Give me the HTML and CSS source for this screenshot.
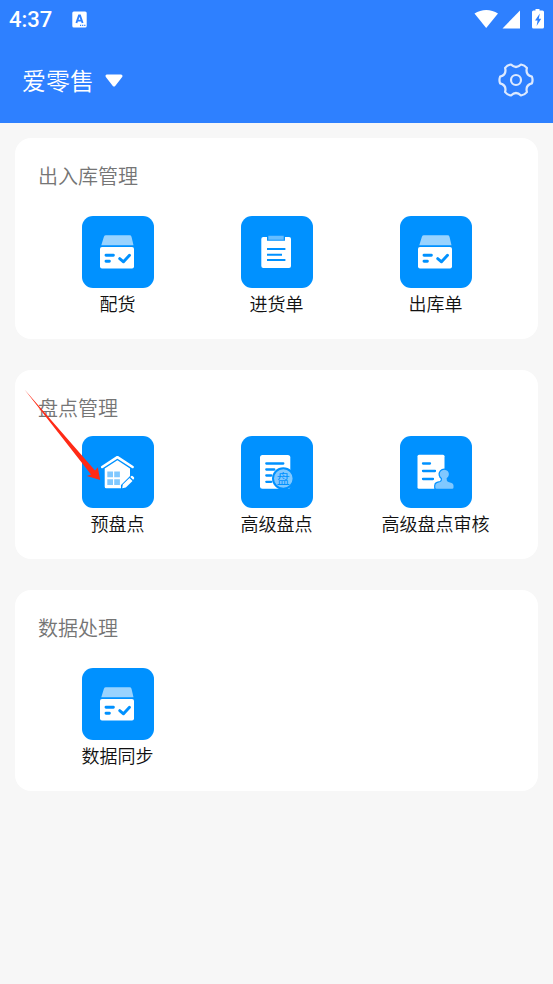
FILE: index.html
```html
<!DOCTYPE html>
<html lang="zh-CN">
<head>
<meta charset="utf-8">
<meta name="viewport" content="width=device-width, initial-scale=1">
<title>爱零售</title>
<link rel="stylesheet" href="styles.css">
</head>
<body>
<svg class="defs" aria-hidden="true">
  <symbol id="box" viewBox="0 0 72 72">
    <path d="M24 19.3h23.6a2 2 0 0 1 1.9 1.4l2 8.600H19.300l2.600-8.600a2.200 2.200 0 0 1 2.100-1.400z" fill="#99d3ff"/>
    <rect x="18" y="31" width="34" height="21.500" rx="2" fill="#fff"/>
    <path d="M24 39.200h7.400M24 45.300h3.400M37.700 42.600l3.800 3.200 6-6.600" fill="none" stroke="#0091ff" stroke-width="2.900" stroke-linecap="round" stroke-linejoin="round"/>
  </symbol>
</svg>
<header class="top">
  <div class="status">
    <span class="clock">4:37</span>
    <svg class="ime" width="16" height="17" viewBox="0 0 16 17" aria-hidden="true">
      <rect x="0.3" y="0.5" width="14.4" height="16" rx="1.6" fill="#fff"/>
      <path d="M4.400 12L7 4.500h1L10.600 12M5.500 9.600h4" fill="none" stroke="#2e80ff" stroke-width="1.900"/>
      <path d="M8 14.300h5.400" stroke="#2e80ff" stroke-width="1.200" stroke-dasharray="1.200 .9"/>
    </svg>
    <svg class="signals" width="70" height="20" viewBox="0 0 70 20" aria-hidden="true">
      <path d="M0.500 4.600C7.500 -.3 17 -.3 24 4.600L12.200 19z" fill="#fff"/>
      <path d="M46 1.500V19.500H28.500z" fill="#fff"/>
      <path d="M61.500 0h4v1.500h3a1.500 1.500 0 0 1 1.500 1.500v15a1.500 1.500 0 0 1-1.500 1.500h-9a1.500 1.500 0 0 1-1.500-1.500V3A1.500 1.500 0 0 1 59.500 1.500h2z" fill="#fff"/>
      <path d="M65.800 4.500l-4.800 7h2.600l-1 5.500 4.600-7.200h-2.400z" fill="#2e80ff"/>
    </svg>
  </div>
  <div class="bar">
    <button class="shop" type="button">爱零售
      <svg width="20" height="16" viewBox="0 0 20 16" aria-hidden="true"><path d="M3 4h14L10 13z" fill="#fff" stroke="#fff" stroke-width="3" stroke-linejoin="round"/></svg>
    </button>
    <button class="gear" type="button" aria-label="设置">
      <svg width="36" height="36" viewBox="-18 -18 36 36" fill="none" stroke="#dce9ff" stroke-width="2.200" stroke-linejoin="round" aria-hidden="true">
        <path d="M-5 -15.500Q0 -10.500 5 -15.500Q8.600 -14.900 10.900 -12.100Q9.100 -5.300 15.900 -3.400Q17.200 0 15.900 3.400Q9.100 5.300 10.900 12.100Q8.600 14.900 5 15.500Q0 10.500 -5 15.500Q-8.600 14.900 -10.900 12.100Q-9.100 5.300 -15.900 3.400Q-17.200 0 -15.900 -3.400Q-9.100 -5.300 -10.900 -12.100Q-8.600 -14.900 -5 -15.500Z"/>
        <circle r="5"/>
      </svg>
    </button>
  </div>
</header>
<main class="cards">
  <section class="card">
    <h2>出入库管理</h2>
    <div class="grid">
      <a class="item" href="#"><svg class="tile"><use href="#box"/></svg><span>配货</span></a>
      <a class="item" href="#"><svg class="tile" viewBox="0 0 72 72">
        <rect x="20.300" y="21" width="29.700" height="31" rx="2" fill="#fff"/>
        <path d="M26 19h18v5.700H26z" fill="#0091ff"/>
        <path d="M27.300 19.700h15.400v4H27.300z" fill="#66bdff"/>
        <path d="M26 33h18.400M26 38.700h15M26 44h18.400" stroke="#0091ff" stroke-width="2"/>
      </svg><span>进货单</span></a>
      <a class="item" href="#"><svg class="tile"><use href="#box"/></svg><span>出库单</span></a>
    </div>
  </section>
  <section class="card compact">
    <h2>盘点管理</h2>
    <div class="grid">
      <a class="item" href="#"><svg class="tile" viewBox="0 0 72 72">
        <path d="M20.200 31L35.400 21.200 50.600 31" fill="none" stroke="#fff" stroke-width="2.600" stroke-linecap="round" stroke-linejoin="round"/>
        <path d="M22.700 32.500L35.400 24.300 48 32.500V40L39 49v3.300H24.200a1.500 1.500 0 0 1-1.500-1.500z" fill="#fff"/>
        <path d="M25.300 35.500h5.700v5.700h-5.700zM32.200 35.500h5.700v5.700h-5.700zM25.300 43.200h5.700v5.700h-5.700zM32.200 43.200h5.700v5.700h-5.700z" fill="#80c8ff"/>
        <path d="M40.200 52.300l.6-3.700 6.700-6.700 3 3-6.700 6.700zM48.300 41.100l1-1q.8-.6 1.600.2l1 1q.7.8 0 1.600l-.8.900z" fill="#fff"/>
      </svg><span>预盘点</span></a>
      <a class="item" href="#"><svg class="tile" viewBox="0 0 72 72">
        <rect x="19" y="19" width="30.300" height="33.700" rx="2.500" fill="#fff"/>
        <path d="M25.300 27.500h17M25.300 33.500h8M25.300 39.500h5M25.300 45.800h5" stroke="#0091ff" stroke-width="2.300" stroke-linecap="round"/>
        <circle cx="42.300" cy="42.500" r="10.300" fill="#80c8ff" stroke="#0091ff" stroke-width="2"/>
        <text class="mark" x="42.300" y="47">盘</text>
      </svg><span>高级盘点</span></a>
      <a class="item" href="#"><svg class="tile" viewBox="0 0 72 72">
        <rect x="17.500" y="18.800" width="27" height="34" rx="1.500" fill="#fff"/>
        <path d="M23 27.500h7M23 35h12M23 43h10" stroke="#0091ff" stroke-width="2.300" stroke-linecap="round"/>
        <path d="M42 42.300a4.600 4.600 0 1 1 4.600 0q-.3 3 1.800 3.800l3.200.8q1.900.6 1.900 2.500v2q0 1.400-1.400 1.400H36.700q-1.400 0-1.400-1.400v-2q0-1.900 1.900-2.500l3-.8q2.100-.8 1.800-3.800z" fill="#80c8ff" stroke="#0091ff" stroke-width="2.400" paint-order="stroke"/>
      </svg><span>高级盘点审核</span></a>
    </div>
    <svg class="arrow" width="78" height="92" viewBox="0 0 78 92" aria-hidden="true"><path d="M0.500 0.500L67 85.500 62.700 87 76.200 91 73.800 78.300 71 81.500z" fill="#ff2a16"/></svg>
  </section>
  <section class="card">
    <h2>数据处理</h2>
    <div class="grid">
      <a class="item" href="#"><svg class="tile"><use href="#box"/></svg><span>数据同步</span></a>
    </div>
  </section>
</main>
</body>
</html>
```
FILE: styles.css
```css
* { box-sizing: border-box; }
body {
  margin: 0;
  min-height: 100vh;
  background: #f7f7f7;
  color: #111;
  font-family: Roboto, "Noto Sans CJK SC", sans-serif;
  font-weight: 350;
}
.defs { position: absolute; width: 0; height: 0; }
.top { background: #2e80ff; color: #fff; }
.status {
  display: flex;
  align-items: center;
  height: 38px;
  padding: 0 9px;
}
.clock { padding-top: 2px; font-size: 22px; font-weight: 500; line-height: 36px; }
.ime { margin-left: 20px; }
.signals { margin-left: auto; }
.bar {
  display: flex;
  align-items: center;
  justify-content: space-between;
  height: 85px;
  padding: 0 19px 2px 22px;
}
button {
  border: 0;
  padding: 0;
  background: none;
  color: inherit;
  font: inherit;
}
.shop { display: flex; align-items: center; gap: 10px; font-size: 24px; }
.gear { display: flex; }
.cards {
  display: flex;
  flex-direction: column;
  gap: 31px;
  padding: 15px;
}
.card {
  position: relative;
  padding: 26px 23px 17px;
  border-radius: 16px;
  background: #fff;
}
h2 {
  margin: 0 0 26px;
  color: #757575;
  font-size: 20px;
  font-weight: 350;
  line-height: 26px;
}
.compact h2 { margin-bottom: 14px; }
.grid { display: grid; grid-template-columns: repeat(3, 1fr); }
.item {
  display: flex;
  flex-direction: column;
  align-items: center;
  color: inherit;
  text-decoration: none;
  font-size: 18px;
  line-height: 34px;
  white-space: nowrap;
}
.tile { width: 72px; height: 72px; border-radius: 11px; background: #0091ff; }
.mark { fill: #0091ff; font-size: 13px; font-weight: 400; text-anchor: middle; }
.arrow { position: absolute; left: 9px; top: 19px; }
```
